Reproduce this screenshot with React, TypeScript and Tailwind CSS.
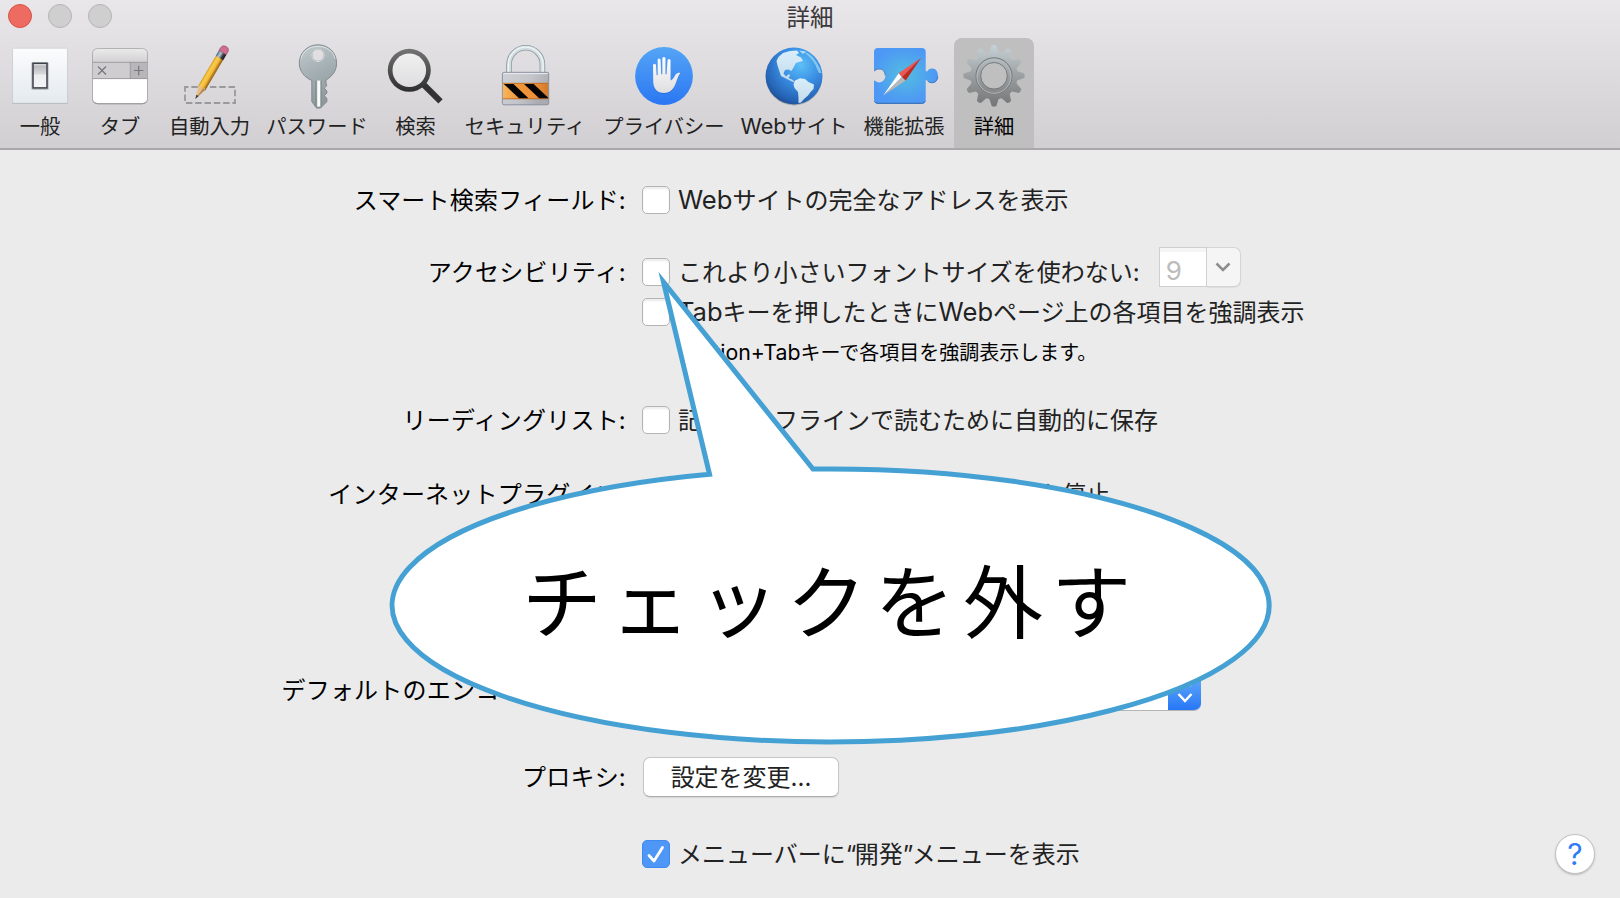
import type { ReactNode } from "react";

const gearTeeth = Array.from({ length: 12 }, (_, i) => i * 30);

function GeneralIcon() {
  return (
    <>
      <defs>
        <linearGradient id="gen" x1="0" y1="0" x2="0" y2="1">
          <stop offset="0" stopColor="#fbfcfd" />
          <stop offset="1" stopColor="#e4eaef" />
        </linearGradient>
        <linearGradient id="genSwitch" x1="0" y1="0" x2="0" y2="1">
          <stop offset="0" stopColor="#f0f1f2" />
          <stop offset="0.12" stopColor="#b9bcbf" />
          <stop offset="0.42" stopColor="#d5d7d9" />
          <stop offset="0.48" stopColor="#eceef0" />
          <stop offset="1" stopColor="#f3f4f6" />
        </linearGradient>
      </defs>
      <rect x="12.5" y="48.8" width="55" height="55.2" rx="1" fill="#a9a9ad" />
      <rect x="12.5" y="48.2" width="55" height="55" rx="1" fill="url(#gen)" stroke="#c9cacd" strokeWidth="0.6" />
      <rect x="31.2" y="62" width="17.6" height="28" rx="1.5" fill="#6b7077" opacity="0.35" />
      <rect x="33" y="63.3" width="14" height="24.6" fill="url(#genSwitch)" stroke="#3d4148" strokeWidth="1.5" />
    </>
  );
}

function TabsIcon() {
  return (
    <>
      <defs>
        <linearGradient id="tabTop" x1="0" y1="0" x2="0" y2="1">
          <stop offset="0" stopColor="#ececec" />
          <stop offset="1" stopColor="#d2d0d2" />
        </linearGradient>
        <clipPath id="tabClip">
          <rect x="92.5" y="48.5" width="55" height="54.8" rx="5" />
        </clipPath>
      </defs>
      <rect x="92.5" y="49" width="55" height="55.3" rx="5" fill="#7f7e81" />
      <g clipPath="url(#tabClip)">
        <rect x="92" y="48" width="56" height="56" fill="#fff" />
        <rect x="92" y="48" width="56" height="14.5" fill="url(#tabTop)" />
        <rect x="92" y="62" width="56" height="17" fill="#cfcdd0" />
        <rect x="130.3" y="62" width="18" height="17" fill="#b8b6b9" />
        <path d="M92 62.3H148M92 78.6H148M130.3 62V79" stroke="#97969a" strokeWidth="0.9" />
      </g>
      <rect x="92.5" y="48.5" width="55" height="55" rx="5" fill="none" stroke="#a3a2a6" strokeWidth="0.8" />
      <path d="M98 66.5l8 8M106 66.5l-8 8M134 70.5h9.4M138.7 65.8v9.4" stroke="#77767a" strokeWidth="1.2" fill="none" />
    </>
  );
}

function AutofillIcon() {
  return (
    <>
      <defs>
        <linearGradient id="pencil" x1="0" y1="0" x2="1" y2="0">
          <stop offset="0" stopColor="#d59a22" />
          <stop offset="0.25" stopColor="#f8cc4c" />
          <stop offset="0.62" stopColor="#f3b936" />
          <stop offset="0.75" stopColor="#c98e25" />
          <stop offset="1" stopColor="#8a5e16" />
        </linearGradient>
        <linearGradient id="ferrule" x1="0" y1="0" x2="1" y2="0">
          <stop offset="0" stopColor="#476981" />
          <stop offset="0.35" stopColor="#b9cad4" />
          <stop offset="0.7" stopColor="#3b3840" />
          <stop offset="1" stopColor="#1d1a1d" />
        </linearGradient>
      </defs>
      <rect x="185" y="87" width="50" height="16" fill="none" stroke="#9a999b" strokeWidth="1.8" strokeDasharray="6.5 2.8" strokeDashoffset="3" />
      <g transform="translate(195.3 99) rotate(30.5) scale(0.88 1)">
        <path d="M0 0L-4.8 -13.5L4.8 -13.5Z" fill="#e3c08e" />
        <path d="M0 0L1.2 -13.5H4.8Z" fill="#b98c59" />
        <path d="M0 0L-1.5 -4.3H1.5Z" fill="#3a3535" />
        <path d="M-4.8 -12V-48H4.8V-12L2.6 -14.5L0 -11.5L-2.6 -14.5Z" fill="url(#pencil)" />
        <rect x="-4.9" y="-54" width="9.8" height="6.4" fill="url(#ferrule)" />
        <path d="M-4.9 -54V-57Q-4.6 -61 0 -61Q4.6 -61 4.9 -57V-54Z" fill="#cf6d90" stroke="#914761" strokeWidth="0.6" />
      </g>
    </>
  );
}

function PasswordIcon() {
  return (
    <>
      <defs>
        <linearGradient id="key" x1="0" y1="0" x2="0.3" y2="1">
          <stop offset="0" stopColor="#c3cbcd" />
          <stop offset="0.5" stopColor="#a5b0b4" />
          <stop offset="1" stopColor="#8f999d" />
        </linearGradient>
      </defs>
      <g transform="translate(0 0.6)">
        <path
          fillRule="evenodd"
          d="M318 44.2C328.500 44.2 336.600 52 336.600 62.500C336.600 70.500 332 76 326 79.300V82.500L326.900 85L324.300 87.500L326.900 90.500V92.500L324.300 95L326.900 98V101L320.500 107.500H316.500L311.800 101V79.800C304.500 77 299.300 70.500 299.300 62.500C299.300 52 307.500 44.2 318 44.2ZM318 48.400a6.200 6.200 0 1 0 0 12.400a6.200 6.200 0 1 0 0 -12.400Z"
          fill="url(#key)"
          stroke="#7c8589"
          strokeWidth="0.9"
        />
        <path d="M301 58C303 50 310 45.800 318 45.800S333 50 335 58" fill="none" stroke="#e1e7e9" strokeWidth="0.9" />
        <circle cx="318" cy="54.600" r="6.300" fill="none" stroke="#dce2e4" strokeWidth="1" />
        <path d="M318.800 80V106" stroke="#f8fafa" strokeWidth="3.200" />
        <path d="M315.800 80V105.500M321.200 80V106" stroke="#7e878c" strokeWidth="0.900" />
      </g>
    </>
  );
}

function SearchIcon() {
  return (
    <>
      <defs>
        <linearGradient id="lensRim" x1="0" y1="0" x2="0" y2="1">
          <stop offset="0" stopColor="#747474" />
          <stop offset="1" stopColor="#2d2d2d" />
        </linearGradient>
        <linearGradient id="lens" x1="0" y1="0" x2="0" y2="1">
          <stop offset="0" stopColor="#f1f1f1" />
          <stop offset="1" stopColor="#dedcdf" />
        </linearGradient>
      </defs>
      <path d="M423 84L440.500 101.300" stroke="#323232" strokeWidth="6" />
      <circle cx="409.300" cy="70.300" r="21.500" fill="url(#lensRim)" />
      <circle cx="409.300" cy="70.300" r="16.800" fill="url(#lens)" />
    </>
  );
}

function SecurityIcon() {
  return (
    <>
      <defs>
        <linearGradient id="lockBody" x1="0" y1="0" x2="1" y2="0.4">
          <stop offset="0" stopColor="#ced1d5" />
          <stop offset="0.6" stopColor="#c3c5ca" />
          <stop offset="1" stopColor="#a9abb1" />
        </linearGradient>
        <linearGradient id="lockBand" x1="0" y1="0" x2="1" y2="0">
          <stop offset="0" stopColor="#f6b65a" />
          <stop offset="0.35" stopColor="#f0963a" />
          <stop offset="0.7" stopColor="#ee9037" />
          <stop offset="1" stopColor="#d27a2b" />
        </linearGradient>
      </defs>
      <path d="M509 73V64.500a16.700 16.700 0 0 1 33.400 0V73" fill="none" stroke="#8b9aa3" strokeWidth="5.600" />
      <path d="M509 73V64.500a16.700 16.700 0 0 1 33.400 0V73" fill="none" stroke="#d3dde0" strokeWidth="4" />
      <path d="M508.300 73V64.500a17.400 17.400 0 0 1 34.800 0V73" fill="none" stroke="#eef5f6" strokeWidth="1.300" />
      <rect x="502.400" y="72.300" width="46.300" height="32.500" rx="1.500" fill="url(#lockBody)" stroke="#858b9b" strokeWidth="0.900" />
      <path d="M503.500 73.600H547.500" stroke="#eaecef" />
      <rect x="502.900" y="83" width="45.300" height="16" fill="url(#lockBand)" />
      <path d="M502.900 83.300H548.200M502.900 98.800H548.200" stroke="#b5652a" strokeWidth="0.800" />
      <path d="M503.800 84H513.500L528.500 98.300H519ZM524 84H533.700L548.200 97.800V98.300H539.200Z" fill="#050505" />
    </>
  );
}

function PrivacyIcon() {
  return (
    <>
      <defs>
        <linearGradient id="priv" x1="0" y1="0" x2="0" y2="1">
          <stop offset="0" stopColor="#54a5f6" />
          <stop offset="1" stopColor="#2b76f3" />
        </linearGradient>
        <linearGradient id="hand" x1="0" y1="0" x2="0" y2="1">
          <stop offset="0" stopColor="#fff" />
          <stop offset="1" stopColor="#dedddf" />
        </linearGradient>
      </defs>
      <circle cx="664" cy="76" r="28.900" fill="url(#priv)" />
      <path
        transform="translate(0 1)"
        d="M653 65.200a1.500 1.500 0 0 1 3 0L656.700 75.200H657.600V60a1.500 1.500 0 0 1 3 0L661.300 74.300H662.300V58.500a1.600 1.600 0 0 1 3.200 0V74.300H666.500L667.500 60.500a1.500 1.500 0 0 1 3.100 0V80.500C672.500 80 674 77.500 675 75.500C676.300 73 679 72.300 680.200 73.200C678.500 75 677.500 79 676 82.500C674 88.500 670.500 93 664 93C657 93 653.500 88.500 653.200 82Z"
        fill="#1559c7"
        opacity="0.350"
      />
      <path
        d="M653 65.200a1.500 1.500 0 0 1 3 0L656.700 75.200H657.600V60a1.500 1.500 0 0 1 3 0L661.300 74.300H662.300V58.500a1.600 1.600 0 0 1 3.200 0V74.300H666.500L667.500 60.500a1.500 1.500 0 0 1 3.100 0V80.500C672.500 80 674 77.500 675 75.500C676.300 73 679 72.300 680.200 73.200C678.500 75 677.500 79 676 82.500C674 88.500 670.500 93 664 93C657 93 653.500 88.500 653.200 82Z"
        fill="url(#hand)"
      />
    </>
  );
}

function WebsitesIcon() {
  return (
    <>
      <defs>
        <radialGradient id="globe" cx="0.620" cy="0.300" r="0.750">
          <stop offset="0" stopColor="#5cc0f6" />
          <stop offset="0.450" stopColor="#3a8ee4" />
          <stop offset="0.850" stopColor="#2563b4" />
          <stop offset="1" stopColor="#1d4c8f" />
        </radialGradient>
        <linearGradient id="land" x1="0" y1="0" x2="0" y2="1">
          <stop offset="0" stopColor="#d8effa" />
          <stop offset="1" stopColor="#c5d9ea" />
        </linearGradient>
      </defs>
      <ellipse cx="794" cy="77" rx="28.400" ry="28.400" fill="#6d7780" opacity="0.450" />
      <circle cx="794" cy="76" r="28.400" fill="url(#globe)" />
      <path
        d="M778.500 57L783 53L790 51L797 50.500L799 53L796 55L801 57.500L803 61L799 62L796 63L793.500 67.500L791.500 71L788.500 69.500L785 70L783.500 73.500L786 76.500L789 74L790 75.500L788.500 78L792 79.500L795 82L798 82.500L796.500 83L792 81.500L786 78.500L781 76L779 70L777.500 65.500L776.500 61Z"
        fill="url(#land)"
      />
      <path
        d="M795 80.500L800 78.200L805 79L808.500 82L814 84.500L813.500 89L810.500 92L808 95.500L804 99L801 102.500L798.500 103L798.500 98L798 92L794.500 88L793.500 84.500Z"
        fill="url(#land)"
      />
      <path d="M804 51.500L809 54L813 57.500L817 63L820 68.500L821.500 73L819 73L817 69L815.500 65L813 61L809.500 57L806 54Z" fill="#a4dcf1" opacity="0.700" />
      <path d="M799 50.500L806 51.500L803 54Z" fill="#c6edf8" opacity="0.800" />
    </>
  );
}

function ExtensionsIcon() {
  return (
    <>
      <defs>
        <radialGradient id="ext" cx="0.480" cy="0.480" r="0.500">
          <stop offset="0" stopColor="#53bde0" />
          <stop offset="1" stopColor="#4d98f5" />
        </radialGradient>
      </defs>
      <path
        d="M878 48H921.700Q925.700 48 925.700 52V71.300H927.500C928.500 69 930.500 68.600 932.300 68.600C936 68.600 938 72 938 76S936 83 932.300 83C930.500 83 928.500 82.500 927.500 80.300H925.700V99.800Q925.700 103.800 921.700 103.800H878Q874 103.800 874 99.800V80.500C875.500 80.500 876 82.400 879 82.400C883 82.400 885.400 79.500 885.400 75.600S883 68.800 879 68.800C876 68.800 875.500 70.700 874 70.700V52Q874 48 878 48Z"
        fill="url(#ext)"
      />
      <path d="M874.500 101.500Q875.500 103.300 878 103.300H921.700Q924.500 103.300 925.300 101.300" fill="none" stroke="#3269ae" strokeWidth="1" />
      <path d="M927.500 80.500C928.500 82.500 930.500 82.700 932.300 82.700C935.500 82.700 937.500 80 937.800 76.500M874.200 71C875.500 70.500 876 69 879 69C883 69 885.200 72 885.200 75.500" fill="none" stroke="#3269ae" strokeWidth="0.800" />
      <path d="M883.200 95.500L898.700 73.200L902 77Z" fill="#fff" />
      <path d="M883.200 95.500L902 77L905.700 80.500Z" fill="#b7b8ba" />
      <path d="M921.200 57.700L898.700 73.200L902 77Z" fill="#ef5751" />
      <path d="M921.200 57.700L902 77L905.700 80.500Z" fill="#c3291f" />
    </>
  );
}

function AdvancedIcon() {
  return (
    <>
      <defs>
        <linearGradient id="gear" gradientUnits="userSpaceOnUse" x1="0" y1="45" x2="0" y2="107">
          <stop offset="0" stopColor="#c6d2d7" />
          <stop offset="0.500" stopColor="#9b9fa1" />
          <stop offset="1" stopColor="#737474" />
        </linearGradient>
        <mask id="gearMask">
          <rect x="954" y="40" width="80" height="70" fill="#000" />
          <circle cx="994" cy="75.800" r="23.800" fill="#fff" />
          {gearTeeth.map((a) => (
            <path key={a} d="M989 53.500L991.700 45.600Q994 44.500 996.300 45.600L999 53.500Z" fill="#fff" transform={`rotate(${a} 994 75.800)`} />
          ))}
          <circle cx="994" cy="75.800" r="13" fill="#000" />
        </mask>
      </defs>
      <rect x="954" y="40" width="80" height="70" fill="url(#gear)" mask="url(#gearMask)" />
      <circle cx="994" cy="75.800" r="18" fill="none" stroke="#727577" strokeWidth="1" />
      <circle cx="994" cy="76.300" r="17" fill="none" stroke="#b9bec0" strokeWidth="0.900" />
      <circle cx="994" cy="75.800" r="13.300" fill="none" stroke="#737678" strokeWidth="0.900" />
    </>
  );
}

type Item = { label: string; x: number; w: number; icon: ReactNode; size: string };

const items: Item[] = [
  { label: "一般", x: 0, w: 80, icon: <GeneralIcon />, size: "w-[80px]" },
  { label: "タブ", x: 80, w: 80, icon: <TabsIcon />, size: "w-[80px]" },
  { label: "自動入力", x: 160, w: 99, icon: <AutofillIcon />, size: "w-[99px]" },
  { label: "パスワード", x: 259, w: 116, icon: <PasswordIcon />, size: "w-[116px]" },
  { label: "検索", x: 375, w: 81, icon: <SearchIcon />, size: "w-[81px]" },
  { label: "セキュリティ", x: 456, w: 138, icon: <SecurityIcon />, size: "w-[138px]" },
  { label: "プライバシー", x: 594, w: 140, icon: <PrivacyIcon />, size: "w-[140px]" },
  { label: "Webサイト", x: 734, w: 120, icon: <WebsitesIcon />, size: "w-[120px]" },
  { label: "機能拡張", x: 854, w: 100, icon: <ExtensionsIcon />, size: "w-[100px]" },
  { label: "詳細", x: 954, w: 80, icon: <AdvancedIcon />, size: "w-[80px] rounded-t-lg bg-[#c0bfc0] text-black" },
];

/* Latin words are set slightly larger than the Japanese text around them. */
function Mixed({ text }: { text: string }) {
  return (
    <>
      {text.split(/([A-Za-z+]+|[“”])/).map((part, i) => {
        if (/^[A-Za-z+]+$/.test(part)) {
          return (
            <span key={i} className="text-[1.065em] leading-none">
              {part}
            </span>
          );
        }
        if (/^[“”]$/.test(part)) {
          return (
            <span key={i} className="tracking-[-1.6px]">
              {part}
            </span>
          );
        }
        return part;
      })}
    </>
  );
}

function Checkbox({ checked = false }: { checked?: boolean }) {
  if (checked) {
    return (
      <span className="flex size-7 shrink-0 items-center justify-center rounded-[5px] border border-[#4189ee] bg-[#4f97f6]">
        <svg viewBox="0 0 28 28" className="size-7 shrink-0">
          <path d="M7 15.500L12 21L20.500 7.500" fill="none" stroke="#fff" strokeWidth="2.800" strokeLinecap="round" strokeLinejoin="round" />
        </svg>
      </span>
    );
  }
  return <span className="size-7 shrink-0 rounded-[5px] border border-[#b4b4b4] bg-white shadow-[inset_0_2px_2px_#ececec]" />;
}

function Caption({ text }: { text: string }) {
  return (
    <span className="ml-2 pt-[2px]">
      <Mixed text={text} />
    </span>
  );
}

function Row({ label, className, children }: { label?: string; className: string; children?: ReactNode }) {
  return (
    <div className={`flex items-center ${className}`}>
      <div className="w-[626px] shrink-0 pt-[2px] text-right tracking-[0.22px] text-black">{label}</div>
      <div className="ml-4 flex items-center">{children}</div>
    </div>
  );
}

export default function App() {
  return (
    <div className="relative flex h-[898px] w-[1620px] flex-col overflow-hidden bg-[#ebebeb] font-['Inter','Noto_Sans_CJK_JP',sans-serif] text-[24px] leading-[40px] whitespace-nowrap text-[#222]">
      <header className="flex h-[150px] shrink-0 flex-col border-b-2 border-[#aaa8ab] bg-linear-to-b from-[#e9e7ea] to-[#d1cfd2]">
        <div className="grid h-[38px] shrink-0 grid-cols-[1fr_auto_1fr] items-start">
          <div className="flex gap-4 pt-1 pl-2">
            <span className="size-6 rounded-full border border-[#d9534a] bg-[#ed6b60]" />
            <span className="size-6 rounded-full border border-[#b4b3b5] bg-[#d0cfd0]" />
            <span className="size-6 rounded-full border border-[#b4b3b5] bg-[#d0cfd0]" />
          </div>
          <h1 className="text-[23.500px] leading-[35px] text-[#3b383b]">詳細</h1>
        </div>
        <nav className="flex flex-1">
          {items.map((it) => (
            <div key={it.label} className={`flex flex-col items-center pt-[2px] ${it.size}`}>
              <svg viewBox={`${it.x} 40 ${it.w} 70`} className="h-[70px] w-full shrink-0">
                {it.icon}
              </svg>
              <span className="text-[20.300px] leading-[34px]">
                <Mixed text={it.label} />
              </span>
            </div>
          ))}
        </nav>
      </header>

      <main className="flex flex-col">
        <Row label="スマート検索フィールド:" className="mt-[30px] h-10">
          <Checkbox />
          <Caption text="Webサイトの完全なアドレスを表示" />
        </Row>
        <Row label="アクセシビリティ:" className="mt-8 h-10">
          <Checkbox />
          <Caption text="これより小さいフォントサイズを使わない:" />
          <span className="mb-[11px] ml-[19px] flex h-10 w-[82px]">
            <span className="w-[48px] border border-[#cfcfcf] bg-white pl-[6px] text-[26px] leading-[46px] text-[#bcbcbc] shadow-[inset_0_4px_0_#f5f5f5]">9</span>
            <span className="flex flex-1 items-center justify-center rounded-r-[7px] border border-l-0 border-[#d4d4d4] bg-[#f5f5f5] shadow-[0_1px_1px_#ddd]">
              <svg viewBox="0 0 16 10" className="h-[10px] w-4">
                <path d="M1.500 1.500L8 8L14.500 1.500" fill="none" stroke="#8d8d8d" strokeWidth="2.500" />
              </svg>
            </span>
          </span>
        </Row>
        <Row className="h-10">
          <Checkbox />
          <Caption text="Tabキーを押したときにWebページ上の各項目を強調表示" />
        </Row>
        <Row className="h-10">
          <span className="ml-[42px] pt-[1px] text-[20px] text-black">
            <Mixed text="Option+Tabキーで各項目を強調表示します。" />
          </span>
        </Row>
        <Row label="リーディングリスト:" className="mt-7 h-10">
          <Checkbox />
          <Caption text="記事をオフラインで読むために自動的に保存" />
        </Row>
        <Row label="インターネットプラグイン:" className="mt-[34px] h-10">
          <Checkbox />
          <Caption text="電力を節約するためにプラグインを停止" />
        </Row>
        <Row label="デフォルトのエンコーディング:" className="mt-[156px] h-10">
          <span className="mt-[2px] flex h-10 w-[559px] overflow-hidden rounded-[7px] border-b border-[#b5b5b5] bg-white">
            <span className="ml-auto flex w-[33px] items-end justify-center bg-linear-to-b from-[#6bb0f9] to-[#2777f6] pb-[7px]">
              <svg viewBox="0 0 16 26" className="h-[26px] w-4">
                <path d="M1.500 8.500L8 2L14.500 8.500M1.500 17L8 24L14.500 17" fill="none" stroke="#fff" strokeWidth="2.500" />
              </svg>
            </span>
          </span>
        </Row>
        <Row label="プロキシ:" className="mt-[47px] h-10">
          <button className="ml-px h-10 w-[196px] rounded-[7px] border border-[#c6c6c6] border-b-[#adadad] bg-white text-center leading-[40px] shadow-[0_1px_1px_#d5d5d5]">
            設定を変更...
          </button>
        </Row>
        <div className="mt-[37px] flex items-center justify-between">
          <Row className="h-10">
            <Checkbox checked />
            <Caption text="メニューバーに“開発”メニューを表示" />
          </Row>
          <button className="mr-[25px] size-10 rounded-full border border-[#c2c2c2] bg-white text-center text-[30px] leading-[38px] text-[#2f7bf6] shadow-[0_1px_2px_#bbb]">
            ?
          </button>
        </div>
      </main>

      <div className="pointer-events-none absolute inset-0">
        <svg viewBox="0 0 1620 898" className="h-full w-full">
          <path
            d="M709.500 474.200L663.500 282L813 469A438.500 136.500 0 1 1 709.500 474.200Z"
            fill="#fff"
            stroke="#45a1d3"
            strokeWidth="5"
            strokeMiterlimit="20"
          />
        </svg>
      </div>
      <p className="absolute top-[551px] left-[522px] text-[80px] leading-[104px] tracking-[8.200px] text-black">チェックを外す</p>
    </div>
  );
}
